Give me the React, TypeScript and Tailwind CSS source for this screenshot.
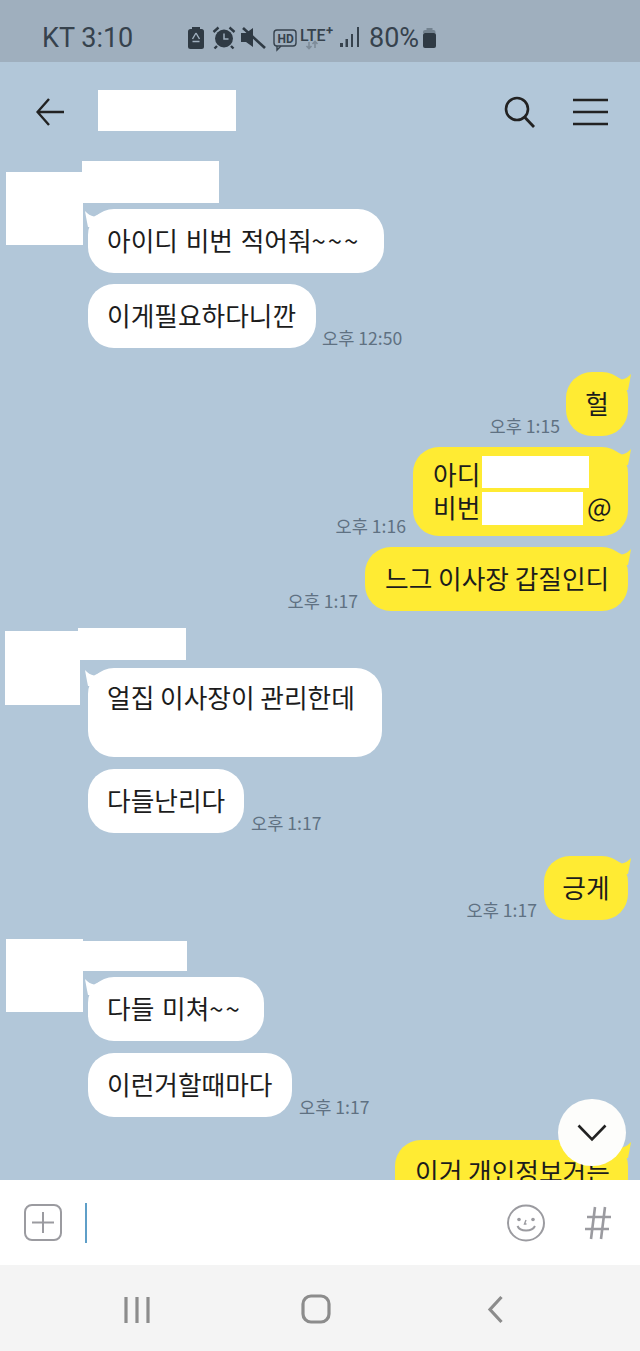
import React from "react";

const ko = "font-['Noto_Sans_CJK_KR','Noto_Sans',sans-serif]";

function TailLeft() {
  return (
    <svg className="absolute left-[-4px] top-0" width="22" height="18" viewBox="0 0 22 18">
      <path d="M1 2 Q5 6.5 10 7.5 L16 4.5 L16 18 L4 18 Q2 8 1 2 Z" fill="#fff" />
    </svg>
  );
}

function TailRight() {
  return (
    <svg className="absolute right-[-4px] top-0" width="22" height="18" viewBox="0 0 22 18">
      <path d="M21 2 Q17 6.5 12 7.5 L6 4.5 L6 18 L18 18 Q20 8 21 2 Z" fill="#ffeb33" />
    </svg>
  );
}

function Time({ t }: { t: string }) {
  return <span className="text-[17.6px] leading-[20px] text-[#5f7182] whitespace-nowrap">{t}</span>;
}

function Bubble({ text, cls, tail, yellow }: { text?: React.ReactNode; cls: string; tail?: boolean; yellow?: boolean }) {
  return (
    <div className={`relative rounded-[26px] text-[25.7px] text-[#1c1c1c] ${yellow ? "bg-[#ffeb33]" : "bg-white"} ${cls}`}>
      {tail && (yellow ? <TailRight /> : <TailLeft />)}
      <div className="relative">{text}</div>
    </div>
  );
}

function Line({ children }: { children: React.ReactNode }) {
  return <div className="h-[64px] leading-[61px] whitespace-nowrap">{children}</div>;
}

export default function App() {
  return (
    <div className={`w-[640px] h-[1351px] flex flex-col overflow-hidden bg-[#b2c7d9] ${ko}`}>
      {/* status bar */}
      <div className="h-[62px] bg-[#9fafbe] flex items-center pl-[42px] pt-[14px] text-[#36424d] shrink-0">
        <span className="text-[27px] leading-[32px] font-['Roboto',sans-serif] w-[146px] whitespace-nowrap">KT 3:10</span>
        <svg width="250" height="30" viewBox="188 23 250 30" className="shrink-0">
          <rect x="188" y="29" width="16" height="20" rx="2.5" fill="#2f3a44" />
          <rect x="192" y="27" width="8" height="3" fill="#2f3a44" />
          <path d="M196 33 l3.5 6 M199.5 41.5 h-7 M192.5 39 l3.5 -6" fill="none" stroke="#a0b0bf" strokeWidth="1.4" />
          <circle cx="224" cy="38.5" r="9" fill="#2f3a44" />
          <path d="M224 33.5 v5.5 h4.5" fill="none" stroke="#a0b0bf" strokeWidth="1.5" />
          <path d="M213.5 32 l5 -4.5 M234.5 32 l-5 -4.5 M217 46 l-2.5 2.5 M231 46 l2.5 2.5" stroke="#2f3a44" strokeWidth="2.4" />
          <path d="M241 33 h5 l7 -5 v19 l-7 -5 h-5 z" fill="#2f3a44" />
          <path d="M243 28 L265 48" stroke="#2f3a44" strokeWidth="2.6" />
          <rect x="274" y="30" width="22" height="16" rx="3" fill="none" stroke="#36424d" strokeWidth="1.4" />
          <path d="M277 46 v4 l4 -4" fill="none" stroke="#36424d" strokeWidth="1.4" />
          <text x="277.5" y="42.5" fontSize="12" fontWeight="700" fill="#36424d" fontFamily="Roboto">HD</text>
          <text x="300" y="41" fontSize="16" fontWeight="500" fill="#36424d" fontFamily="Roboto">LTE</text>
          <text x="326" y="35" fontSize="13" fontWeight="700" fill="#36424d" fontFamily="Roboto">+</text>
          <path d="M309 42 v6 M306.5 46 l2.5 2.5 l2.5 -2.5 M315 48 v-6 M312.5 44 l2.5 -2.5 l2.5 2.5" fill="none" stroke="#7d8b98" strokeWidth="1.6" />
          <rect x="340" y="43" width="3" height="4" fill="#36424d" />
          <rect x="345.5" y="39" width="2.5" height="8" fill="#36424d" />
          <rect x="351" y="34" width="2" height="13" fill="#36424d" />
          <rect x="357" y="27" width="2" height="20" fill="#36424d" />
          <text x="369" y="47" fontSize="27" fill="#36424d" fontFamily="Roboto">80%</text>
          <rect x="423" y="33" width="13" height="15" rx="2" fill="#2f3a44" />
          <path d="M423 33 v-1 a2 2 0 0 1 2 -2 h1.5 v-2 h6 v2 h1 a2 2 0 0 1 2 2 v1 z" fill="#73828f" />
        </svg>
      </div>

      {/* chat */}
      <div className="relative flex-1 min-h-0 overflow-hidden bg-[#b2c7d9]">
        {/* header */}
        <div className="h-[99px] flex items-center pl-[36px] pr-[32px]">
          <svg width="28" height="28" viewBox="0 0 28 28" className="shrink-0">
            <path d="M13 1 L1.5 14 L13 27 M1.5 14 H28" fill="none" stroke="#222" strokeWidth="2.4" />
          </svg>
          <div className="ml-[34px] mb-[2px] w-[138px] h-[41px] bg-white" />
          <svg width="32" height="32" viewBox="0 0 32 32" className="ml-auto shrink-0">
            <circle cx="13" cy="13" r="11" fill="none" stroke="#222" strokeWidth="2.6" />
            <path d="M20.5 21 L30 31" stroke="#222" strokeWidth="2.8" />
          </svg>
          <svg width="35" height="28" viewBox="0 0 35 28" className="ml-[37px] shrink-0">
            <path d="M0 2 H35 M0 14 H35 M0 26 H35" stroke="#222" strokeWidth="2.6" />
          </svg>
        </div>

        {/* group 1 */}
        <div className="relative pl-[88px] pt-[48px]">
          <div className="absolute left-[6px] top-[11px] w-[77px] h-[73px] bg-white" />
          <div className="absolute left-[82px] top-0 w-[137px] h-[42px] bg-white" />
          <Bubble
            tail
            cls="w-[296px] px-[19px]"
            text={
              <Line>
                <span className="[word-spacing:2px]">아이디 비번 적어줘</span>
                <span className="tracking-[2px]">~~~</span>
              </Line>
            }
          />
          <div className="flex items-end gap-[6px] mt-[11px]">
            <Bubble cls="w-[228px] px-[19px]" text={<Line>이게필요하다니깐</Line>} />
            <Time t="오후 12:50" />
          </div>
        </div>

        {/* my messages */}
        <div className="flex items-end justify-end gap-[6px] pr-[12px] mt-[24px]">
          <Time t="오후 1:15" />
          <Bubble yellow tail cls="w-[62px] text-center" text={<Line>헐</Line>} />
        </div>
        <div className="flex items-end justify-end gap-[7px] pr-[12px] mt-[11px]">
          <Time t="오후 1:16" />
          <Bubble
            yellow
            tail
            cls="w-[215px] h-[89px]"
            text={
              <>
                <div className="pl-[20px] pt-[10px] h-[43px] leading-[33px]">아디</div>
                <div className="pl-[20px] h-[33px] leading-[33px]">비번</div>
                <span className="absolute left-[174px] top-[42px] leading-[33px] text-[26px]">@</span>
                <div className="absolute left-[69px] top-[9px] w-[107px] h-[32px] bg-white" />
                <div className="absolute left-[69px] top-[45px] w-[101px] h-[33px] bg-white" />
              </>
            }
          />
        </div>
        <div className="flex items-end justify-end gap-[7px] pr-[12px] mt-[11px]">
          <Time t="오후 1:17" />
          <Bubble yellow tail cls="w-[263px] px-[20px]" text={<Line>느그 이사장 갑질인디</Line>} />
        </div>

        {/* group 2 */}
        <div className="relative pl-[88px] pt-[40px] mt-[17px]">
          <div className="absolute left-[5px] top-[3px] w-[75px] h-[74px] bg-white" />
          <div className="absolute left-[78px] top-0 w-[108px] h-[32px] bg-white" />
          <Bubble
            tail
            cls="w-[294px] h-[89px] px-[19px]"
            text={<div className="leading-[57px] whitespace-nowrap">얼집 이사장이 관리한데</div>}
          />
          <div className="flex items-end gap-[7px] mt-[12px]">
            <Bubble cls="w-[156px] px-[19px]" text={<Line>다들난리다</Line>} />
            <Time t="오후 1:17" />
          </div>
        </div>

        <div className="flex items-end justify-end gap-[7px] pr-[12px] mt-[23px]">
          <Time t="오후 1:17" />
          <Bubble yellow tail cls="w-[84px] text-center" text={<Line>긍게</Line>} />
        </div>

        {/* group 3 */}
        <div className="relative pl-[88px] pt-[38px] mt-[19px]">
          <div className="absolute left-[6px] top-0 w-[77px] h-[73px] bg-white" />
          <div className="absolute left-[82px] top-[2px] w-[105px] h-[30px] bg-white" />
          <Bubble
            tail
            cls="w-[176px] px-[19px]"
            text={
              <Line>
                <span className="[word-spacing:2px]">다들 미쳐</span>
                <span className="tracking-[2px]">~~</span>
              </Line>
            }
          />
          <div className="flex items-end gap-[7px] mt-[12px]">
            <Bubble cls="w-[204px] px-[19px]" text={<Line>이런거할때마다</Line>} />
            <Time t="오후 1:17" />
          </div>
        </div>

        <div className="flex justify-end pr-[12px] mt-[23px]">
          <Bubble yellow tail cls="w-[233px] px-[20px]" text={<Line>이거 개인정보거든</Line>} />
        </div>

        {/* scroll to bottom */}
        <div className="absolute left-[558px] top-[1037px] w-[68px] h-[67px] rounded-full bg-[#fdfdfb] flex items-center justify-center">
          <svg width="30" height="18" viewBox="0 0 30 18">
            <path d="M1.5 1.5 L15 15.5 L28.5 1.5" fill="none" stroke="#222" strokeWidth="2.6" />
          </svg>
        </div>
      </div>

      {/* input bar */}
      <div className="h-[85px] shrink-0 bg-white flex items-center pl-[24px] pr-[29px]">
        <svg width="38" height="37" viewBox="0 0 38 37" className="shrink-0">
          <rect x="1" y="1" width="36" height="35" rx="7" fill="none" stroke="#9b9ba0" strokeWidth="2" />
          <path d="M19 8 V29 M8 18.5 H30" stroke="#9b9ba0" strokeWidth="2" />
        </svg>
        <div className="ml-[23px] w-[2px] h-[40px] bg-[#5f9fc8]" />
        <svg width="38" height="38" viewBox="0 0 38 38" className="ml-auto shrink-0">
          <ellipse cx="19" cy="19" rx="18" ry="17.5" fill="none" stroke="#9b9ba0" strokeWidth="2" />
          <circle cx="12" cy="15.5" r="1.8" fill="#9b9ba0" />
          <circle cx="26" cy="15.5" r="1.8" fill="#9b9ba0" />
          <path d="M10.5 22 C13 28 25 28 28 22" fill="none" stroke="#9b9ba0" strokeWidth="2" />
          <path d="M19 16 l-1.5 4 h2" fill="none" stroke="#9b9ba0" strokeWidth="1.4" />
        </svg>
        <svg width="26" height="34" viewBox="0 0 26 34" className="ml-[40px] shrink-0">
          <path d="M10 1 L6 33 M20 1 L16 33 M2 11 H26 M0 23 H24" fill="none" stroke="#9b9ba0" strokeWidth="2.6" />
        </svg>
      </div>

      {/* nav bar */}
      <div className="h-[86px] shrink-0 bg-[#f4f4f4] flex items-center justify-center gap-[119px] pr-[8px] pt-[2px]">
        <svg width="60" height="30" viewBox="0 0 60 30" className="shrink-0">
          <path d="M19 3 V29 M30 3 V29 M41 3 V29" stroke="#8c8c8c" strokeWidth="3.2" />
        </svg>
        <svg width="60" height="30" viewBox="0 0 60 30" className="shrink-0">
          <rect x="17" y="2" width="26" height="26" rx="8" fill="none" stroke="#8c8c8c" strokeWidth="3.2" />
        </svg>
        <svg width="60" height="30" viewBox="0 0 60 30" className="shrink-0">
          <path d="M36.5 3 L25 15.5 L36.5 28" fill="none" stroke="#8c8c8c" strokeWidth="3.2" />
        </svg>
      </div>
    </div>
  );
}
